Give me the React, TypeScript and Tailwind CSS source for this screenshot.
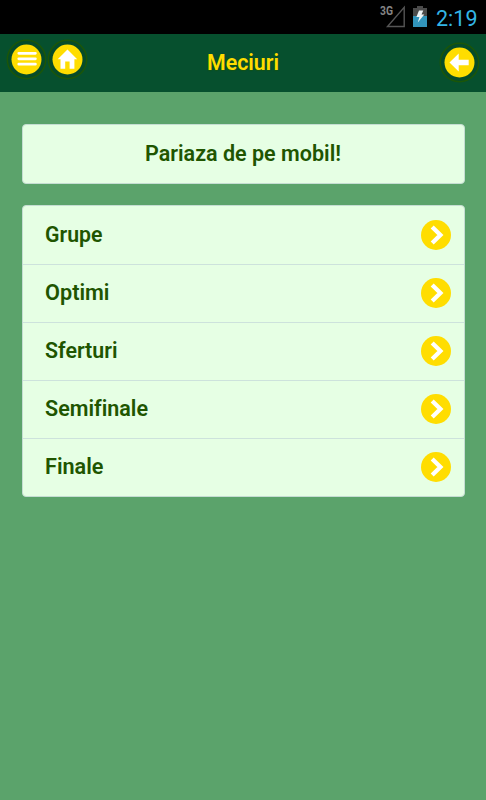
import type { ReactNode } from 'react'

const stages = [
  { name: 'Grupe', width: 57.5 },
  { name: 'Optimi', width: 64.5 },
  { name: 'Sferturi', width: 72.5 },
  { name: 'Semifinale', width: 103 },
  { name: 'Finale', width: 58.5 },
]

function Label({ text, width, className = '' }: { text: string; width: number; className?: string }) {
  return (
    <svg width={width} height="30" className={`overflow-visible [font-variant-ligatures:none] ${className}`}>
      <text x="0" y="22" textLength={width} lengthAdjust="spacingAndGlyphs" fill="currentColor">{text}</text>
    </svg>
  )
}

function RoundButton({ label, children }: { label: string; children: ReactNode }) {
  return (
    <button aria-label={label} className="size-[41px] shrink-0">
      <svg viewBox="0 0 41 41" className="size-full overflow-visible">
        <circle cx="20.5" cy="20.5" r="19.2" fill="#064b29" stroke="#1b5608" strokeWidth="1.5" />
        <circle cx="20.5" cy="20.5" r="15" fill="#ffdd00" />
        {children}
      </svg>
    </button>
  )
}

function StatusBar() {
  return (
    <div className="flex h-[34px] justify-end bg-black">
      <svg width="120" height="34" viewBox="0 0 120 34">
        <text x="14" y="15.2" textLength="13" lengthAdjust="spacingAndGlyphs" fill="#858585" fontSize="12" fontWeight="700">3G</text>
        <path d="M38.2 7.4V26.5H21.5z" fill="none" stroke="#555" strokeWidth="1.4" />
        <path d="M51 6h6v2h4v8H47V8h4z" fill="#4b4b4b" />
        <path d="M47 16h14v11H47z" fill="#3294bb" />
        <path d="M53 10.5h4.3l-1.8 4h2.8L51.8 22.5l1.6-5.5h-3z" fill="#eef4f7" />
        <text x="70" y="25.5" textLength="41.5" lengthAdjust="spacingAndGlyphs" fill="#33b5e5" fontSize="22.5">2:19</text>
      </svg>
    </div>
  )
}

export default function App() {
  return (
    <div className="h-[800px] w-[486px] overflow-hidden bg-[#5ba36b] font-['Roboto',sans-serif]">
      <StatusBar />
      <header className="flex h-[58px] items-start bg-[#06502e] pt-[5px] pl-[6px] text-[22px] font-semibold text-[#ffdd00]">
        <RoundButton label="Meniu">
          <path d="M12.8 14.3h16.6M12.8 19.8h16.6M12.8 25.2h16.6" stroke="#fff" strokeWidth="2.8" strokeLinecap="round" />
        </RoundButton>
        <RoundButton label="Acasa">
          <path d="M20.5 10.5l9.7 9.8h-2.8v9.4h-4.8v-7.3h-4.4v7.3h-4.7v-9.4h-2.8z" fill="#fff" />
        </RoundButton>
        <h1 className="ml-[119px] pt-[9px] [text-shadow:0_1px_1px_#155313]">
          <Label text="Meciuri" width={72} />
        </h1>
        <div className="ml-auto pt-[3px] pr-[6px]">
          <RoundButton label="Inapoi">
            <path d="M10.5 20.5l9.2-9v6.3h10v5.4h-10v6.3z" fill="#fff" />
          </RoundButton>
        </div>
      </header>

      <main className="px-[21px] pt-8 text-[22px] font-semibold text-[#205500]">
        <div className="mx-auto flex h-[60px] w-[443px] items-center justify-center rounded-[4px] border border-[#c5ddd2] bg-[#e6ffe4]">
          <Label text="Pariaza de pe mobil!" width={196} />
        </div>

        <ul className="mx-auto mt-[21px] w-[443px] divide-y divide-[#cde2dc] rounded-[4px] border border-[#c5ddd2] bg-[#e6ffe4]">
          {stages.map(stage => (
            <li key={stage.name} className="flex h-[58px] items-center justify-between pr-[13px] pb-[1.5px] pl-[22px] first:h-[59px] first:pb-0 last:h-[57px]">
              <Label text={stage.name} width={stage.width} />
              <svg width="30" height="30" viewBox="0 0 30 30">
                <circle cx="15" cy="15" r="15" fill="#ffdd00" />
                <path d="M11.2 7l8.2 8-8.2 8" fill="none" stroke="#fff" strokeWidth="4.3" />
              </svg>
            </li>
          ))}
        </ul>
      </main>
    </div>
  )
}
